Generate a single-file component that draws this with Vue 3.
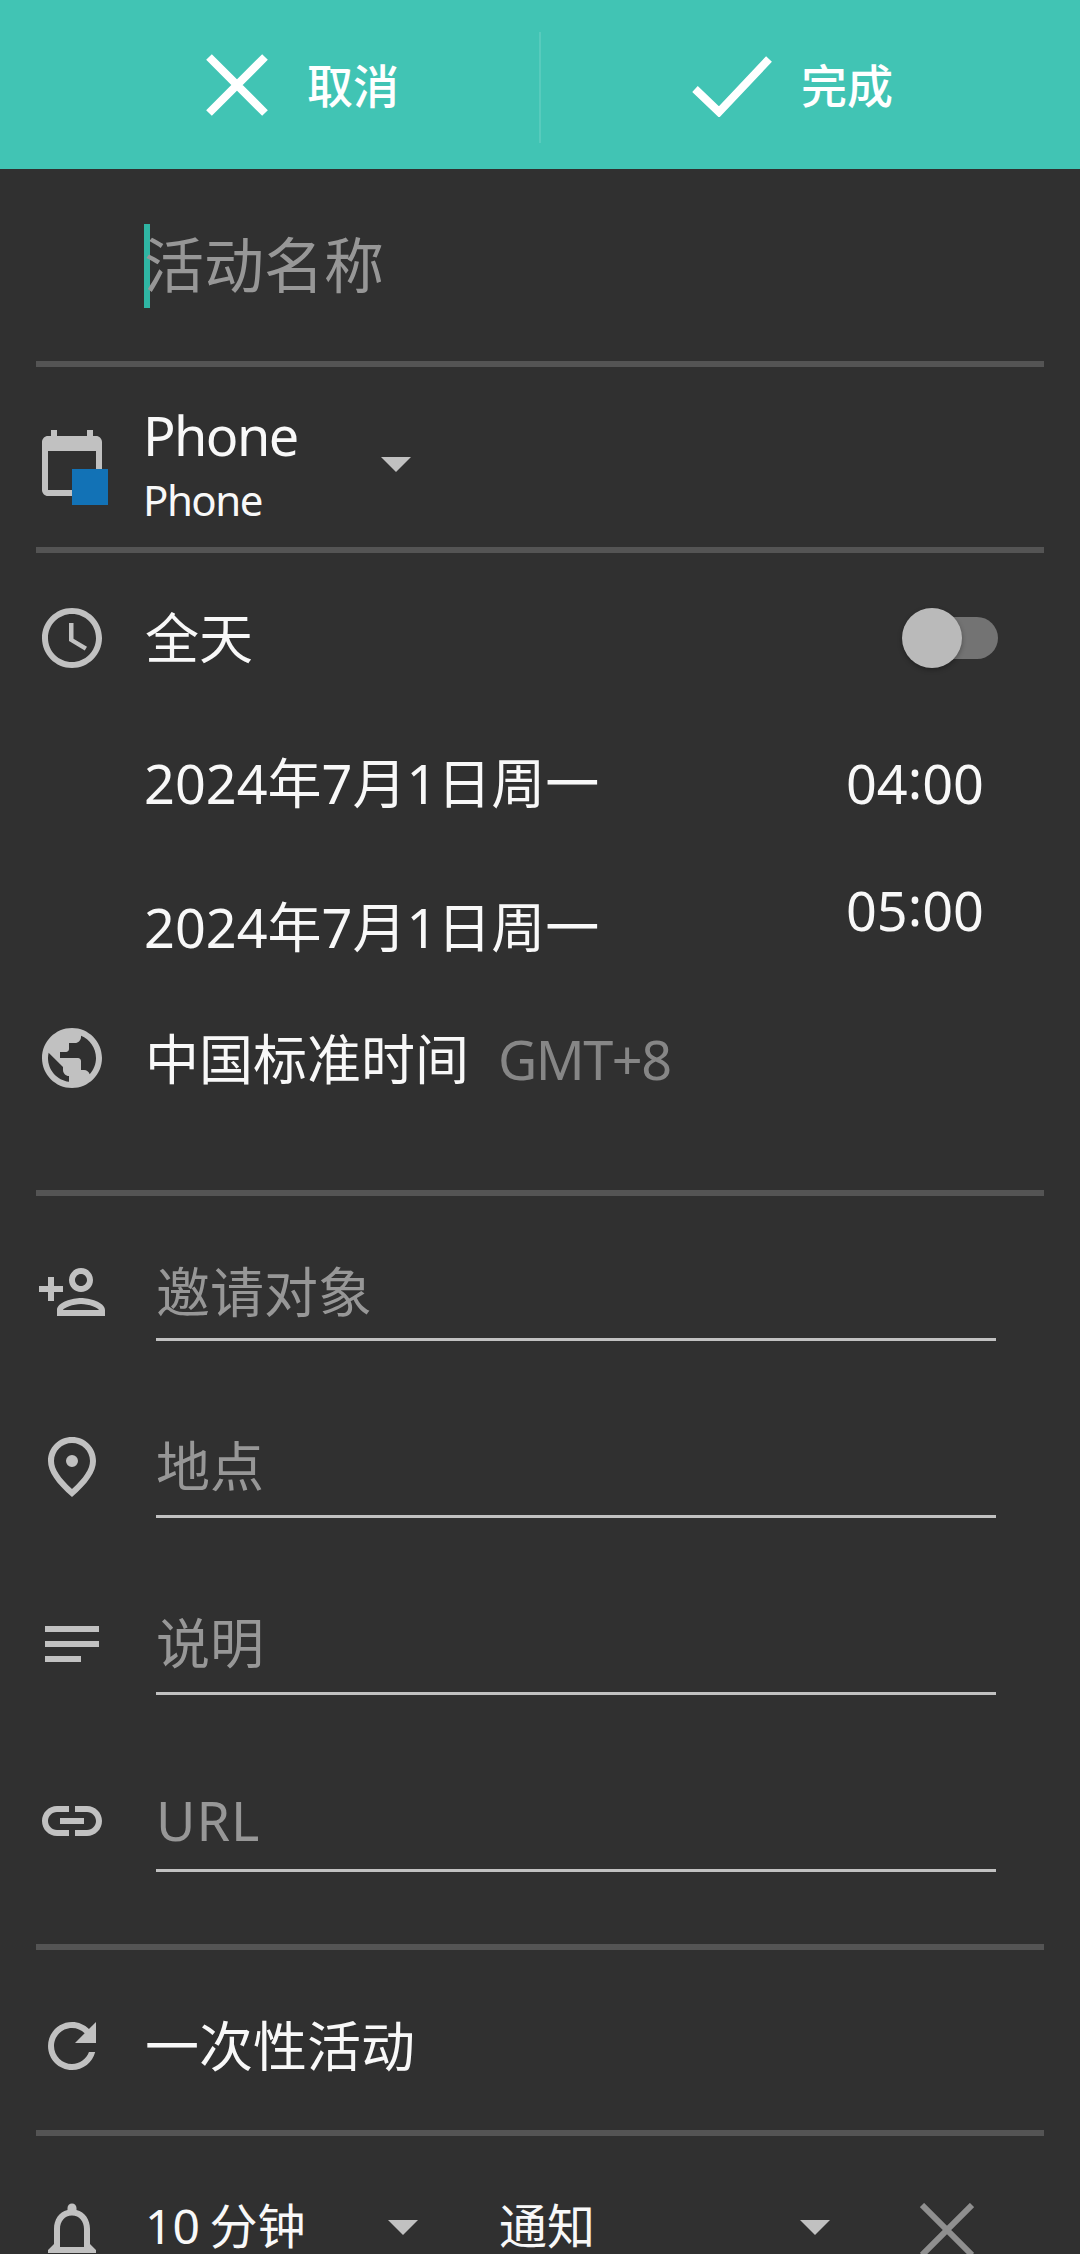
<script setup>

import { ref, computed } from 'vue';

const allDay = ref(false);

const icons = {
    calendar: 'M20 3h-1V1h-2v2H7V1H5v2H4c-1.1 0-2 .9-2 2v16c0 1.1.9 2 2 2h16c1.1 0 2-.9 2-2V5c0-1.1-.9-2-2-2zm0 18H4V8h16v13z',
    clock: 'M11.99 2C6.47 2 2 6.48 2 12s4.47 10 9.99 10C17.52 22 22 17.52 22 12S17.52 2 11.99 2zM12 20c-4.42 0-8-3.58-8-8s3.58-8 8-8 8 3.58 8 8-3.58 8-8 8zm.5-13H11v6l5.25 3.15.75-1.23-4.5-2.67z',
    globe: 'M12 2C6.48 2 2 6.48 2 12s4.48 10 10 10 10-4.48 10-10S17.52 2 12 2zm-1 17.93c-3.95-.49-7-3.85-7-7.93 0-.62.08-1.21.21-1.79L9 15v1c0 1.1.9 2 2 2v1.93zm6.9-2.54c-.26-.81-1-1.39-1.9-1.39h-1v-3c0-.55-.45-1-1-1H8v-2h2c.55 0 1-.45 1-1V7h2c1.1 0 2-.9 2-2v-.41c2.93 1.19 5 4.06 5 7.41 0 2.08-.8 3.97-2.1 5.39z',
    repeat: 'M17.65 6.35C16.2 4.9 14.21 4 12 4c-4.42 0-7.99 3.58-7.99 8s3.57 8 7.99 8c3.73 0 6.84-2.55 7.73-6h-2.08c-.82 2.33-3.04 4-5.65 4-3.31 0-6-2.69-6-6s2.69-6 6-6c1.66 0 3.14.69 4.22 1.78L13 11h7V4l-2.35 2.35z',
    bell: 'M18 16v-5c0-3.07-1.64-5.64-4.5-6.32V4c0-.83-.67-1.5-1.5-1.5s-1.5.67-1.5 1.5v.68C7.63 5.36 6 7.92 6 11v5l-2 2v1h16v-1l-2-2zm-2 1H8v-6c0-2.48 1.51-4.5 4-4.5s4 2.02 4 4.5v6z'
}

const times = ref([
    { key: 'start', date: '2024年7月1日周一', hour: '04', minute: '00' },
    { key: 'end', date: '2024年7月1日周一', hour: '05', minute: '00' }
])

const fields = [
    {
        key: 'guests',
        label: '邀请对象',
        icon: 'M15 12c2.21 0 4-1.79 4-4s-1.79-4-4-4-4 1.79-4 4 1.79 4 4 4zm0-6c1.1 0 2 .9 2 2s-.9 2-2 2-2-.9-2-2 .9-2 2-2zm0 8c-2.67 0-8 1.34-8 4v2h16v-2c0-2.66-5.33-4-8-4zm-6 4c.22-.72 3.31-2 6-2 2.7 0 5.8 1.29 6 2H9zm-3-3v-3h3v-2H6V7H4v3H1v2h3v3z'
    },
    {
        key: 'place',
        label: '地点',
        icon: 'M12 2c-4.42 0-8 3.5-8 8 0 3.6 2.7 7.4 8 12 5.3-4.6 8-8.4 8-12 0-4.5-3.58-8-8-8zm0 17.3C8 15.7 6 12.6 6 10c0-3.4 2.7-6 6-6s6 2.6 6 6c0 2.6-2 5.7-6 9.3zM12 8a2 2 0 1 0 0 4 2 2 0 0 0 0-4z'
    },
    {
        key: 'notes',
        label: '说明',
        icon: 'M3 6h18v2H3zM3 11h18v2H3zM3 16h12v2H3z'
    },
    {
        key: 'url',
        label: 'URL',
        icon: 'M11 15H7c-1.65 0-3-1.35-3-3s1.35-3 3-3h4V7H7c-2.76 0-5 2.24-5 5s2.24 5 5 5h4zM17 7h-4v2h4c1.65 0 3 1.35 3 3s-1.35 3-3 3h-4v2h4c2.76 0 5-2.24 5-5s-2.24-5-5-5zM8 11h8v2H8z'
    }
]

const switchClass = computed(() => {
    return {
        'switch': true,
        'on': allDay.value
    }
})

const toggleAllDay = () => {
    allDay.value = !allDay.value;
}
</script>

<template>
    <div class="page">
        <div class="action-bar">
            <div class="action cancel">
                <svg class="action-cross" viewBox="0 0 62 62">
                    <path d="M3 3L59 59M59 3L3 59" />
                </svg>
                <span class="text">取消</span>
            </div>
            <div class="action-line"></div>
            <div class="action done">
                <svg class="action-check" viewBox="0 0 80 62">
                    <path d="M3 34L27 57L77 4" />
                </svg>
                <span class="text">完成</span>
            </div>
        </div>

        <div class="title-row">
            <div class="caret"></div>
            <span class="text">活动名称</span>
        </div>
        <div class="divider"></div>

        <div class="row calendar-row">
            <div class="calendar-icon">
                <svg class="icon" viewBox="0 0 24 24"><path :d="icons.calendar" /></svg>
                <div class="calendar-color"></div>
            </div>
            <div class="calendar-names">
                <span class="calendar-name">Phone</span>
                <span class="calendar-account">Phone</span>
            </div>
            <div class="arrow"></div>
        </div>
        <div class="divider"></div>

        <div class="row all-day">
            <svg class="icon" viewBox="0 0 24 24"><path :d="icons.clock" /></svg>
            <span class="text">全天</span>
            <div :class="switchClass" @click="toggleAllDay">
                <div class="thumb"></div>
            </div>
        </div>
        <div v-for="time in times" :key="time.key" class="row time-row" :class="time.key">
            <span class="text date">{{ time.date }}</span>
            <span class="text time">{{ time.hour }}<span class="colon">:</span>{{ time.minute }}</span>
        </div>
        <div class="row timezone">
            <svg class="icon" viewBox="0 0 24 24"><path :d="icons.globe" /></svg>
            <span class="text">中国标准时间</span>
            <span class="text offset">GMT+8</span>
        </div>
        <div class="divider"></div>

        <div class="fields">
            <div v-for="field in fields" :key="field.key" class="row field" :class="field.key">
                <svg class="icon" viewBox="0 0 24 24"><path :d="field.icon" /></svg>
                <div class="field-input">
                    <span class="text">{{ field.label }}</span>
                </div>
            </div>
        </div>
        <div class="divider"></div>

        <div class="row repeat">
            <svg class="icon" viewBox="0 0 24 24"><path :d="icons.repeat" /></svg>
            <span class="text">一次性活动</span>
        </div>
        <div class="divider"></div>

        <div class="row reminder">
            <svg class="icon" viewBox="0 0 24 24"><path :d="icons.bell" /></svg>
            <div class="select minutes">
                <span class="text">10 分钟</span>
                <div class="arrow"></div>
            </div>
            <div class="select method">
                <span class="text">通知</span>
                <div class="arrow"></div>
            </div>
            <svg class="remove" viewBox="0 0 54 54">
                <path d="M2 2L52 52M52 2L2 52" />
            </svg>
        </div>
    </div>
</template>

<style>
body {
    margin: 0;
    background: #303030;
}
</style>

<style scoped>
.page {
    width: 1080px;
    height: 2254px;
    overflow: hidden;
    background: #303030;
    color: #f8f8f8;
    font-family: "Noto Sans", "Noto Sans CJK SC", sans-serif;
    font-size: 54px;
    line-height: 1;
}

.text {
    white-space: nowrap;
}

.action-bar {
    display: flex;
    align-items: center;
    height: 169px;
    background: #41c4b4;
    color: white;
    font-size: 46px;
    font-weight: 500;
}
.action {
    display: flex;
    align-items: center;
    flex: none;
    box-sizing: border-box;
    width: 539px;
}
.action-line {
    width: 2px;
    height: 111px;
    margin-top: 5px;
    background: #58cbbd;
}
.cancel {
    padding-left: 206px;
    gap: 39px;
}
.done {
    padding-left: 151px;
    gap: 29px;
}
.action svg {
    height: 62px;
    fill: none;
    stroke: white;
    stroke-width: 8;
}
.action-cross {
    width: 62px;
}
.action-check {
    width: 80px;
    margin-top: 2px;
}

.title-row {
    display: flex;
    align-items: center;
    height: 192px;
    padding-left: 144px;
    color: #979797;
    font-size: 60px;
}
.caret {
    width: 6px;
    height: 84px;
    margin-top: 2px;
    margin-right: -6px;
    background: #2fb5a3;
}

.divider {
    height: 6px;
    margin: 0 36px;
    background: #545454;
}

.row {
    display: flex;
    align-items: center;
    padding: 0 36px;
}
.icon {
    flex: none;
    width: 72px;
    height: 72px;
    margin-right: 37px;
    fill: #c1c1c1;
}

.calendar-row {
    height: 180px;
}
.calendar-icon {
    position: relative;
    height: 72px;
    margin-top: 12px;
}
.calendar-color {
    position: absolute;
    left: 36px;
    top: 42px;
    width: 36px;
    height: 36px;
    background: #1272b6;
}
.calendar-names {
    display: flex;
    flex-direction: column;
    gap: 17px;
    width: 238px;
    margin-top: 15px;
    margin-left: -2px;
}
.calendar-name {
    letter-spacing: -1.6px;
}
.calendar-account {
    font-size: 42px;
    letter-spacing: -1.5px;
}
.arrow {
    width: 30px;
    height: 15px;
    background: #c1c1c1;
    clip-path: polygon(0 0, 100% 0, 50% 100%);
}
.calendar-row .arrow {
    margin-top: 15px;
}

.all-day {
    height: 170px;
}
.switch {
    display: flex;
    align-items: center;
    width: 84px;
    height: 42px;
    margin-left: auto;
    margin-right: 46px;
    border-radius: 21px;
    background: #737373;
    cursor: pointer;
}
.thumb {
    flex: none;
    width: 60px;
    height: 60px;
    margin-left: -12px;
    border-radius: 50%;
    background: #bababa;
    box-shadow: 0 2px 5px rgba(0, 0, 0, 0.3);
}
.on .thumb {
    margin-left: 36px;
}

.time-row {
    justify-content: space-between;
    padding: 0 96px 0 144px;
}
.start {
    height: 120px;
}
.end {
    height: 168px;
}
.end .time {
    margin-bottom: 35px;
}
.colon {
    line-height: 0;
    vertical-align: 5px;
}
.timezone {
    height: 94px;
    padding-bottom: 85px;
}
.timezone .text {
    margin-top: 2px;
}
.offset {
    margin-left: 29px;
    color: #868686;
    letter-spacing: -1.5px;
}

.fields {
    display: flex;
    flex-direction: column;
    gap: 75px;
    padding: 47px 0 72px;
}
.field-input {
    display: flex;
    align-items: center;
    box-sizing: border-box;
    width: 840px;
    height: 102px;
    margin-left: 11px;
    border-bottom: 3px solid #c1c1c1;
    color: #979797;
}
.guests .field-input {
    height: 98px;
    padding-top: 3px;
}
.url .field-input {
    letter-spacing: 1px;
}

.repeat {
    height: 168px;
    padding-top: 12px;
}
.reminder {
    height: 180px;
    font-size: 48px;
}
.reminder .icon {
    margin-top: 12px;
}
.select {
    display: flex;
    align-items: center;
    justify-content: space-between;
}
.select .arrow {
    margin-top: 3px;
}
.minutes {
    width: 273px;
    margin-right: 81px;
    word-spacing: -3px;
}
.method {
    width: 331px;
    margin-right: 90px;
}
.remove {
    width: 54px;
    height: 54px;
    margin-top: 8px;
    fill: none;
    stroke: #8f8f8f;
    stroke-width: 6;
}
</style>
